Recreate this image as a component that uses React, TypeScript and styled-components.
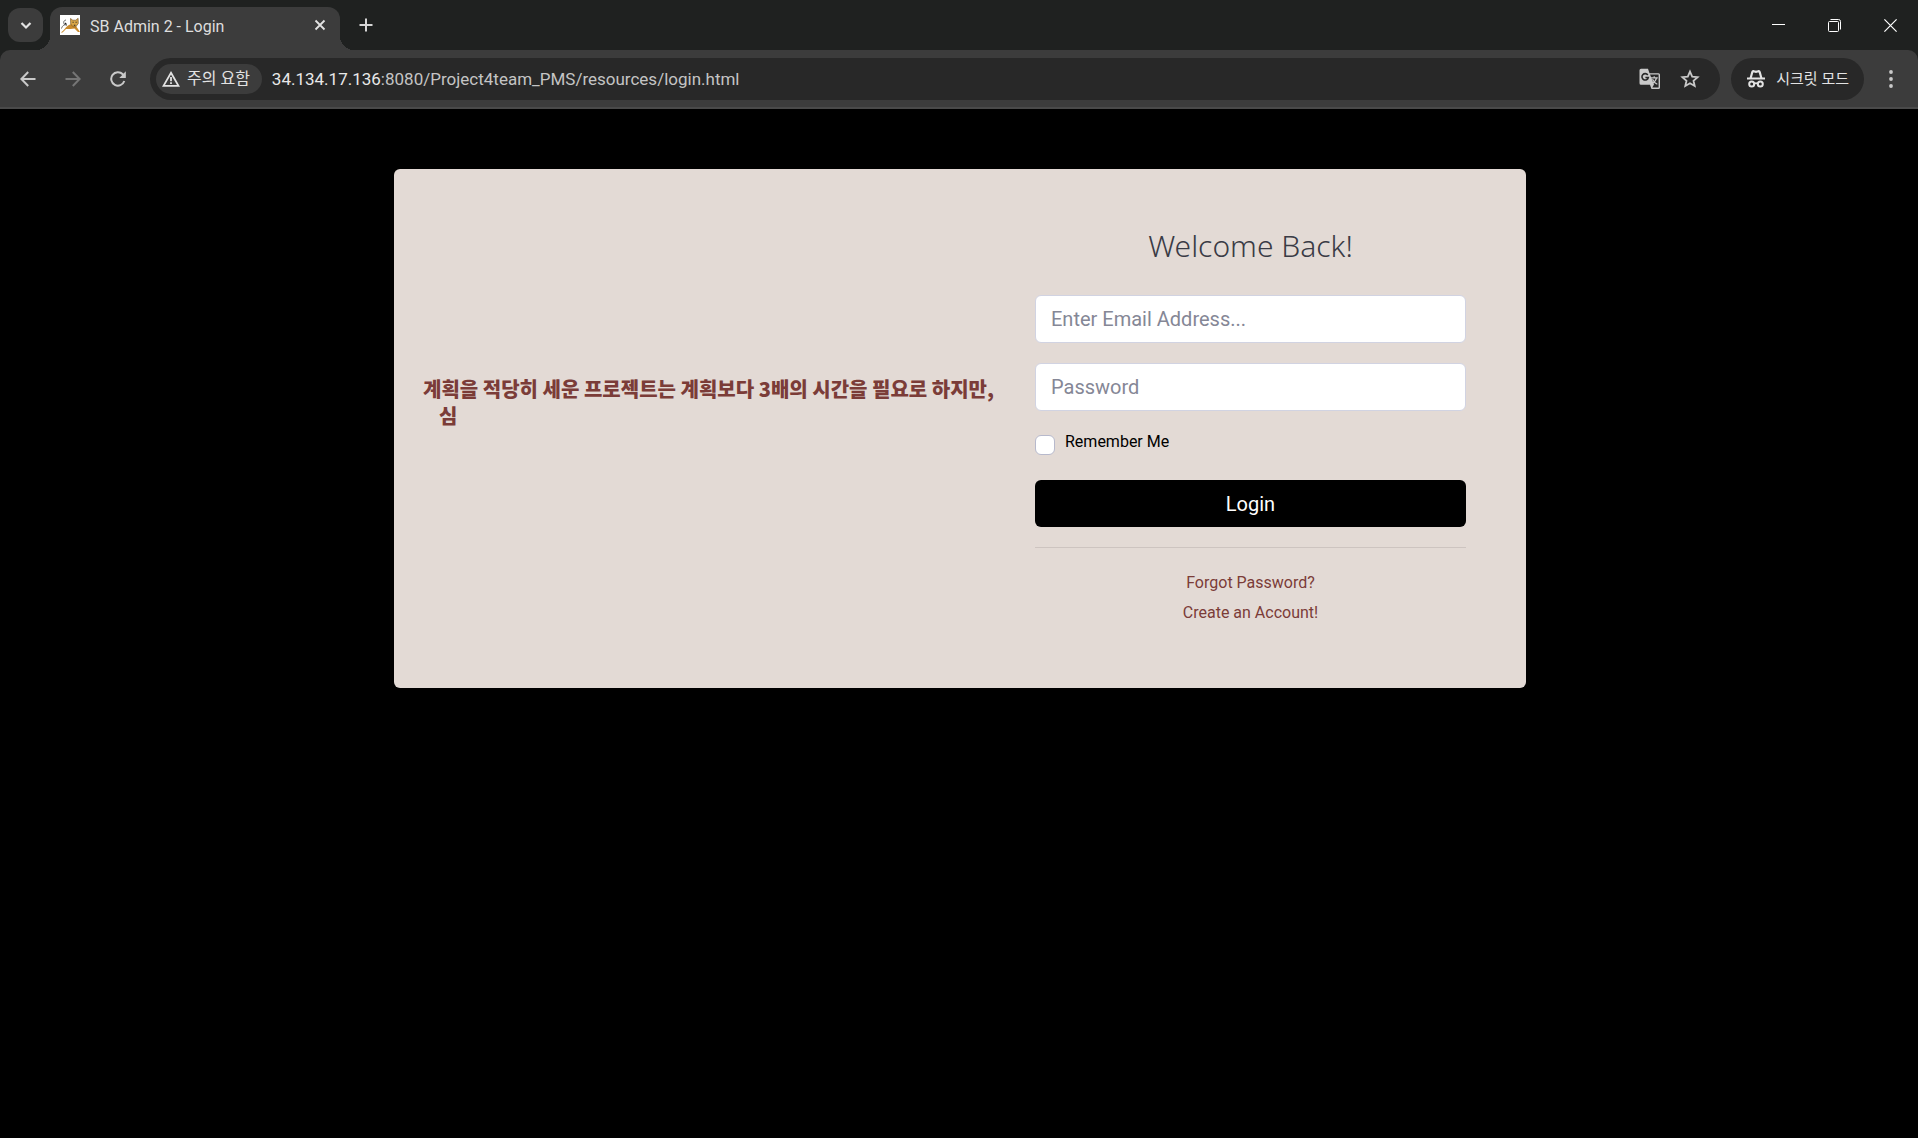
import React from "react";
import styled, { createGlobalStyle } from "styled-components";

const uiFont = `Roboto, "Noto Sans CJK KR", sans-serif`;
const maroon = "#7b3c38";

const GlobalStyle = createGlobalStyle`
  *, *::before, *::after { box-sizing: border-box; }
  body { margin: 0; background: #000; font-family: ${uiFont}; }
  button, input { font-family: inherit; }
`;

const Window = styled.div`
  display: flex;
  flex-direction: column;
  min-height: 100vh;
  background: #000;
`;

/* ---------- browser chrome ---------- */

const TabStrip = styled.header`
  display: flex;
  align-items: flex-end;
  height: 50px;
  padding-left: 8px;
  background: #1f2120;
`;

const IconButton = styled.button<{ $w?: number; $h?: number; $color?: string }>`
  display: flex;
  flex: none;
  align-items: center;
  justify-content: center;
  width: ${(p) => p.$w ?? 36}px;
  height: ${(p) => p.$h ?? 36}px;
  padding: 0;
  border: 0;
  background: transparent;
  color: ${(p) => p.$color ?? "#c9c9c9"};
`;

const TabSearch = styled(IconButton)`
  align-self: center;
  border-radius: 12px;
  background: #3c3c3c;
`;

const Tab = styled.div`
  position: relative;
  display: flex;
  align-items: center;
  width: 290px;
  height: 43px;
  margin-left: 7px;
  padding: 0 8px 7px 10px;
  border-radius: 12px 12px 0 0;
  background: #3c3c3c;

  &::before,
  &::after {
    content: "";
    position: absolute;
    bottom: 0;
    width: 14px;
    height: 14px;
  }
  &::before {
    right: 100%;
    background: radial-gradient(circle at 0 0, transparent 14px, #3c3c3c 14px);
  }
  &::after {
    left: 100%;
    background: radial-gradient(circle at 100% 0, transparent 14px, #3c3c3c 14px);
  }
`;

const TabTitle = styled.span`
  flex: 1;
  padding-top: 4px;
  margin-left: 10px;
  font-size: 16px;
  line-height: 24px;
  color: #dedede;
`;

const TabTools = styled.div`
  display: flex;
  flex: 1;
  align-items: center;
  justify-content: space-between;
  height: 50px;
  padding-left: 8px;
`;

const WindowControls = styled.div`
  display: flex;
`;

const ToolbarBack = styled.div`
  background: #1f2120;
`;

const Toolbar = styled.nav`
  display: flex;
  align-items: center;
  height: 59px;
  padding-left: 8px;
  border-bottom: 2px solid #4a4a4a;
  border-radius: 10px 10px 0 0;
  background: #3c3c3c;
`;

const NavButtons = styled.div`
  display: flex;
  gap: 9px;
  padding-left: 2px;
`;

const Omnibox = styled.div`
  display: flex;
  flex: 1;
  align-items: center;
  height: 42px;
  margin-left: 14px;
  padding: 0 10px 0 6px;
  border-radius: 21px;
  background: #282828;
`;

const SecurityChip = styled.button`
  display: flex;
  align-items: center;
  gap: 7px;
  height: 30px;
  padding: 0 12px 0 6px;
  border: 0;
  border-radius: 15px;
  background: #3c3c3c;
  font-size: 16px;
  line-height: 24px;
  color: #e3e3e3;
`;

const AddressText = styled.div`
  flex: 1;
  margin-left: 10px;
  font-size: 17px;
  line-height: 24px;
  color: #c4c4c4;
`;

const Host = styled.span`
  color: #e8e8e8;
`;

const IncognitoChip = styled.button`
  display: flex;
  align-items: center;
  gap: 10px;
  height: 42px;
  margin-left: 11px;
  padding: 0 15px;
  border: 0;
  border-radius: 21px;
  background: #282828;
  font-size: 15px;
  line-height: 24px;
  color: #e3e3e3;
`;

/* ---------- login page ---------- */

const Page = styled.main`
  flex: 1;
  padding: 60px 24px 60px 26px;
`;

const Card = styled.section`
  display: grid;
  grid-template-columns: minmax(0, 1fr) minmax(0, 1fr);
  max-width: 1132px;
  margin: 0 auto;
  border-radius: 6px;
  background: #e3dad5;
`;

const Quote = styled.blockquote`
  margin: 206px 0 0;
  padding-left: 45px;
  font-family: "Noto Sans CJK KR", sans-serif;
  font-size: 20px;
  font-weight: 900;
  line-height: 27px;
  white-space: nowrap;
  color: ${maroon};
`;

const QuoteLine = styled.span<{ $continued?: boolean }>`
  display: block;
  text-indent: ${(p) => (p.$continued ? "0" : "-16px")};
`;

const LoginPanel = styled.div`
  padding: 60px 60px 60px 75px;
`;

const Title = styled.h1`
  margin: 0 0 32px;
  font-family: "Noto Sans", sans-serif;
  font-size: 30px;
  font-weight: 300;
  line-height: 34px;
  text-align: center;
  color: #3a3b45;
`;

const Form = styled.form`
  display: flex;
  flex-direction: column;
  gap: 20px;
`;

const Field = styled.input`
  width: 100%;
  height: 48px;
  padding: 0 15px;
  border: 1px solid #d1d3e2;
  border-radius: 6px;
  background: #fff;
  font-size: 20px;
  line-height: 30px;
  color: #6e707e;

  &::placeholder {
    color: #858796;
    opacity: 1;
  }
`;

const Remember = styled.div`
  display: flex;
  align-items: flex-start;
  gap: 10px;
  height: 29px;
`;

const Checkbox = styled.input`
  flex: none;
  width: 20px;
  height: 20px;
  margin: 4px 0 0;
  appearance: none;
  border: 1px solid #b7b9cc;
  border-radius: 6px;
  background: #fff;

  &:checked {
    background: #000;
  }
`;

const RememberLabel = styled.label`
  font-size: 16px;
  line-height: 22px;
  color: #000;
`;

const LoginButton = styled.button`
  height: 47px;
  border: 0;
  border-radius: 6px;
  background: #000;
  font-size: 20px;
  line-height: 30px;
  color: #fff;
`;

const Divider = styled.hr`
  margin: 20px 0;
  border: 0;
  border-top: 1px solid #cdc4c0;
`;

const Links = styled.div`
  display: flex;
  flex-direction: column;
  align-items: center;
`;

const TextLink = styled.a`
  font-size: 16px;
  line-height: 30px;
  color: ${maroon};
  text-decoration: none;
`;

/* ---------- icons ---------- */

const Svg = ({ w, h = w, box, children }: { w: number; h?: number; box: string; children: React.ReactNode }) => (
  <svg width={w} height={h} viewBox={box} fill="none" stroke="currentColor" aria-hidden="true">
    {children}
  </svg>
);

const ChevronIcon = () => (
  <Svg w={12} box="0 0 12 12"><path d="M1.5 4l4.5 4.5L10.5 4" strokeWidth="2.2" /></Svg>
);
const CloseIcon = () => (
  <Svg w={12} box="0 0 12 12"><path d="M1.5 1.5l9 9M10.5 1.5l-9 9" strokeWidth="1.800" /></Svg>
);
const PlusIcon = () => (
  <Svg w={14} box="0 0 14 14"><path d="M7 .5v13M.5 7h13" strokeWidth="2" /></Svg>
);
const BackIcon = () => (
  <Svg w={16} box="0 0 16 16"><path d="M8.2 1L1.4 8l6.8 7M1.5 8H15.500" strokeWidth="2" /></Svg>
);
const ForwardIcon = () => (
  <Svg w={16} box="0 0 16 16"><path d="M7.800 1l6.800 7-6.800 7M14.500 8H.5" strokeWidth="2" /></Svg>
);
const ReloadIcon = () => (
  <Svg w={16} box="0 0 16 16">
    <path d="M14.300 10A6.700 6.700 0 1 1 12.800 3.300L14.800 5.600" strokeWidth="2" />
    <path d="M15.800.3v6.700H9.300z" fill="currentColor" stroke="none" />
  </Svg>
);
const WarningIcon = () => (
  <Svg w={18} h={16} box="0 0 18 16">
    <path d="M9 1.800L16.500 14.900h-15z" strokeWidth="1.800" />
    <path d="M9 6v4.200M9 11.200v1.900" strokeWidth="1.800" />
  </Svg>
);
const StarIcon = () => (
  <Svg w={20} box="0 0 20 20">
    <path d="M10 2.600l2.200 5 5.400.5-4.100 3.600 1.200 5.300L10 14.200 5.300 17l1.200-5.300L2.400 8.100l5.400-.5z" strokeWidth="1.800" />
  </Svg>
);
const KebabIcon = () => (
  <Svg w={4} h={18} box="0 0 4 18">
    <g fill="currentColor" stroke="none">
      <circle cx="2" cy="2" r="1.900" /><circle cx="2" cy="9" r="1.900" /><circle cx="2" cy="16" r="1.900" />
    </g>
  </Svg>
);
const TranslateIcon = () => (
  <Svg w={22} box="0 0 22 22">
    <path d="M2 .8h7l1.500 4.500h9a1.500 1.500 0 0 1 1.500 1.500v12.700a1.500 1.500 0 0 1-1.500 1.500h-7L11 16.700H2a1.500 1.500 0 0 1-1.500-1.500V2.300A1.500 1.500 0 0 1 2 .8z" fill="#c9c9c9" stroke="none" />
    <path d="M11 6.600h8.600v13h-6.300l1.700-3z" fill="#282828" stroke="none" />
    <path d="M8.800 7A3.200 3.200 0 1 0 9.300 9.500H6.400" stroke="#282828" strokeWidth="1.600" />
    <path d="M12 9.800h6.800M15.200 8.300v1.500M17.500 9.800c-.5 2.600-2.200 4.400-4.200 5.600M13.500 11.200c1 2.400 2.700 4 4.800 5" strokeWidth="1.200" />
  </Svg>
);
const IncognitoIcon = () => (
  <Svg w={20} box="0 0 20 20">
    <path d="M1 9.500h18" strokeWidth="2" />
    <path d="M4.600 9.200L6.300 3Q6.600 2 7.600 2.200L10 2.900l2.400-.7Q13.400 2 13.700 3l1.700 6.200" strokeWidth="2.200" />
    <circle cx="5.700" cy="15" r="2.500" strokeWidth="2" />
    <circle cx="14.300" cy="15" r="2.500" strokeWidth="2" />
    <path d="M8.200 14.600q1.800-.8 3.600 0" strokeWidth="1.800" />
  </Svg>
);
const MinimizeIcon = () => (
  <Svg w={13} box="0 0 13 13"><path d="M0 5.500h13" /></Svg>
);
const RestoreIcon = () => (
  <Svg w={13} box="0 0 13 13">
    <rect x=".5" y="2.500" width="10" height="10" rx="1" />
    <path d="M2.500.5h8a2 2 0 0 1 2 2v8" />
  </Svg>
);
const WindowCloseIcon = () => (
  <Svg w={13} box="0 0 13 13"><path d="M.4.4l12.200 12.200M12.600.4L.4 12.600" strokeWidth="1.200" /></Svg>
);
const Favicon = () => (
  <Svg w={20} box="0 0 20 20">
    <rect width="20" height="20" fill="#fff" stroke="none" />
    <path d="M5 10C3 8 3.300 5.500 6 5M1.500 13.500C2.500 10 5 9 7 10.500" stroke="#555" strokeWidth=".9" />
    <path d="M.8 17.500C4 16 5 12.500 8 10.500l3-1.500 5 2 4 6h-2l-3.500-3.500-4 .5L6 14l-3.500 3.500z" fill="#c98a2c" stroke="none" />
    <path d="M10.500 3.500l2.300 1.700h3l2.300-1.900.2 5.200-2.500 3.300h-2.700l-2.400-2.800z" fill="#d9a648" stroke="#6b4a1c" strokeWidth=".6" />
    <path d="M12.600 7.300h1M15.600 7.300h1M13.800 10.200h1.600M5 8l1.500 1.500" stroke="#222" strokeWidth="1.100" />
  </Svg>
);

export default function App() {
  return (
    <Window>
      <GlobalStyle />
      <TabStrip>
        <TabSearch $w={35} $h={34} $color="#e3e3e3" aria-label="탭 검색"><ChevronIcon /></TabSearch>
        <Tab>
          <Favicon />
          <TabTitle>SB Admin 2 - Login</TabTitle>
          <IconButton $w={24} $h={24} $color="#e3e3e3" aria-label="탭 닫기"><CloseIcon /></IconButton>
        </Tab>
        <TabTools>
          <IconButton $color="#d6d6d6" aria-label="새 탭"><PlusIcon /></IconButton>
          <WindowControls>
            <IconButton $w={56} $h={48} $color="#fff" aria-label="최소화"><MinimizeIcon /></IconButton>
            <IconButton $w={56} $h={48} $color="#fff" aria-label="이전 크기로"><RestoreIcon /></IconButton>
            <IconButton $w={56} $h={48} $color="#fff" aria-label="닫기"><WindowCloseIcon /></IconButton>
          </WindowControls>
        </TabTools>
      </TabStrip>

      <ToolbarBack>
        <Toolbar>
          <NavButtons>
            <IconButton aria-label="뒤로"><BackIcon /></IconButton>
            <IconButton $color="#757575" aria-label="앞으로"><ForwardIcon /></IconButton>
            <IconButton aria-label="새로고침"><ReloadIcon /></IconButton>
          </NavButtons>
          <Omnibox>
            <SecurityChip><WarningIcon />주의 요함</SecurityChip>
            <AddressText><Host>34.134.17.136</Host>:8080/Project4team_PMS/resources/login.html</AddressText>
            <IconButton $w={40} aria-label="번역"><TranslateIcon /></IconButton>
            <IconButton $w={40} aria-label="북마크"><StarIcon /></IconButton>
          </Omnibox>
          <IncognitoChip><IncognitoIcon />시크릿 모드</IncognitoChip>
          <IconButton $w={54} aria-label="메뉴"><KebabIcon /></IconButton>
        </Toolbar>
      </ToolbarBack>

      <Page>
        <Card>
          <Quote>
            <QuoteLine>계획을 적당히 세운 프로젝트는 계획보다 3배의 시간을 필요로 하지만,</QuoteLine>
            <QuoteLine $continued>심</QuoteLine>
          </Quote>
          <LoginPanel>
            <Title>Welcome Back!</Title>
            <Form onSubmit={(e) => e.preventDefault()}>
              <Field type="email" placeholder="Enter Email Address..." aria-label="Enter Email Address..." />
              <Field type="password" placeholder="Password" aria-label="Password" />
              <Remember>
                <Checkbox type="checkbox" id="remember" />
                <RememberLabel htmlFor="remember">Remember Me</RememberLabel>
              </Remember>
              <LoginButton type="submit">Login</LoginButton>
            </Form>
            <Divider />
            <Links>
              <TextLink href="#forgot">Forgot Password?</TextLink>
              <TextLink href="#register">Create an Account!</TextLink>
            </Links>
          </LoginPanel>
        </Card>
      </Page>
    </Window>
  );
}
